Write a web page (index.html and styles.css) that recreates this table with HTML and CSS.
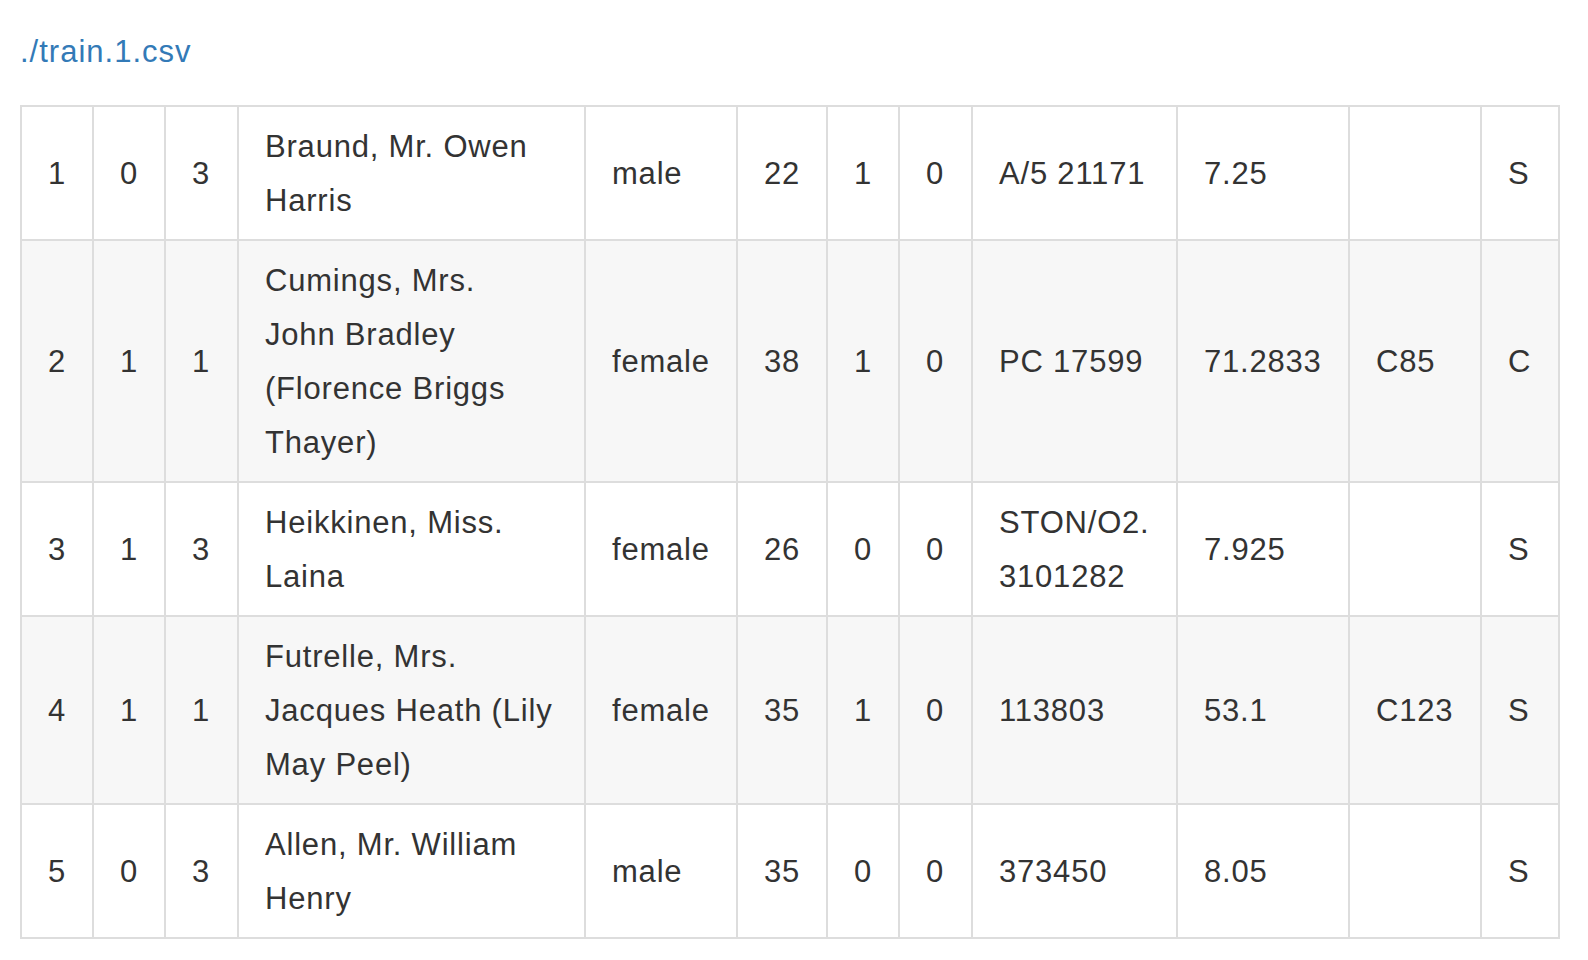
FILE: index.html
```html
<!DOCTYPE html>
<html lang="en">
<head>
<meta charset="utf-8">
<title>train.1.csv</title>
<link rel="stylesheet" href="styles.css">
</head>
<body>
<div class="page">
  <a class="file-link" href="#">./train.1.csv</a>
  <table class="data-table">
    <colgroup>
      <col class="w72"><col class="w72"><col class="w73"><col class="w347"><col class="w152"><col class="w90"><col class="w72"><col class="w73"><col class="w205"><col class="w172"><col class="w132"><col class="w78">
    </colgroup>
    <tbody>
      <tr><td>1</td><td>0</td><td>3</td><td>Braund, Mr. Owen<br>Harris</td><td>male</td><td>22</td><td>1</td><td>0</td><td>A/5 21171</td><td>7.25</td><td></td><td>S</td></tr>
      <tr><td>2</td><td>1</td><td>1</td><td>Cumings, Mrs.<br>John Bradley<br>(Florence Briggs<br>Thayer)</td><td>female</td><td>38</td><td>1</td><td>0</td><td>PC 17599</td><td>71.2833</td><td>C85</td><td>C</td></tr>
      <tr><td>3</td><td>1</td><td>3</td><td>Heikkinen, Miss.<br>Laina</td><td>female</td><td>26</td><td>0</td><td>0</td><td>STON/O2.<br>3101282</td><td>7.925</td><td></td><td>S</td></tr>
      <tr><td>4</td><td>1</td><td>1</td><td>Futrelle, Mrs.<br>Jacques Heath (Lily<br>May Peel)</td><td>female</td><td>35</td><td>1</td><td>0</td><td>113803</td><td>53.1</td><td>C123</td><td>S</td></tr>
      <tr><td>5</td><td>0</td><td>3</td><td>Allen, Mr. William<br>Henry</td><td>male</td><td>35</td><td>0</td><td>0</td><td>373450</td><td>8.05</td><td></td><td>S</td></tr>
    </tbody>
  </table>
</div>
</body>
</html>
```
FILE: styles.css
```css
html, body {
  margin: 0;
  padding: 0;
  background: #ffffff;
}

body {
  font-family: "Liberation Sans", Arial, Helvetica, sans-serif;
  color: #333333;
}

.page {
  padding: 25px 20px 0 20px;
  display: flex;
  flex-direction: column;
  align-items: flex-start;
}

.file-link {
  display: block;
  font-size: 31px;
  letter-spacing: 1px;
  line-height: 54px;
  color: #337ab7;
  text-decoration: none;
  margin-bottom: 26px;
}

.data-table {
  border-collapse: collapse;
  table-layout: fixed;
  width: 1537px;
  font-size: 31px;
  letter-spacing: 0.8px;
  line-height: 54px;
}

.data-table td {
  border: 2px solid #dddddd;
  padding: 13px 20px 11px 26px;
  vertical-align: middle;
  text-align: left;
  white-space: nowrap;
}

.data-table tr:nth-child(even) td {
  background: #f7f7f7;
}

.w72 { width: 72px; }
.w73 { width: 73px; }
.w78 { width: 78px; }
.w90 { width: 90px; }
.w132 { width: 132px; }
.w152 { width: 152px; }
.w172 { width: 172px; }
.w205 { width: 205px; }
.w347 { width: 347px; }
```
